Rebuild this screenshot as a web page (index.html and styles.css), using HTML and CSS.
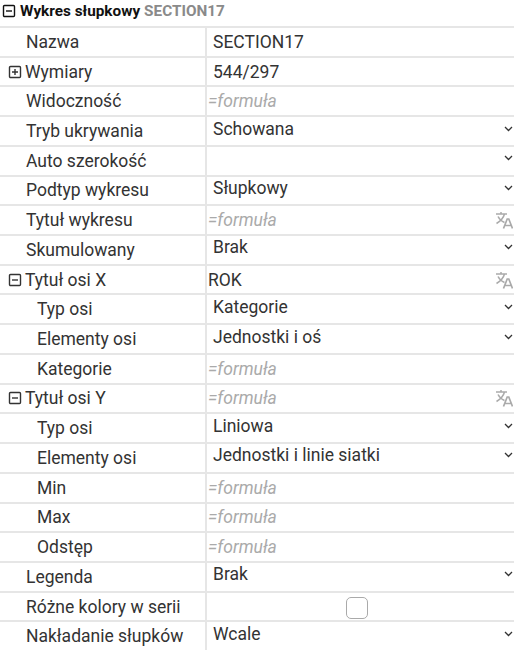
FILE: index.html
```html
<!DOCTYPE html>
<html lang="pl">
<head>
    <meta charset="UTF-8">
    <title>Wykres słupkowy</title>
    <link rel="stylesheet" href="styles.css">
</head>
<body>
    <svg class="icon-defs" width="0" height="0">
        <symbol id="minus" viewBox="0 0 14 14"><rect x="1.5" y="1.5" width="11" height="11" rx="1" fill="none" stroke="currentColor" stroke-width="1.4"/><path d="M4 7h6" stroke="currentColor" stroke-width="1.4"/></symbol>
        <symbol id="plus" viewBox="0 0 14 14"><rect x="1.5" y="1.5" width="11" height="11" rx="1" fill="none" stroke="currentColor" stroke-width="1.4"/><path d="M4 7h6M7 4v6" stroke="currentColor" stroke-width="1.4"/></symbol>
        <symbol id="chevron" viewBox="0 0 9 6"><path d="M1 1l3.5 3.5L8 1" fill="none" stroke="currentColor" stroke-width="1.3"/></symbol>
        <symbol id="translate" viewBox="0 0 18 18"><path d="M1 3h11M6 1v2M9.500 3C8.500 7 5.500 10 1.500 12.500M3 5.500c1.500 3 4 5 6.500 6" fill="none" stroke="currentColor" stroke-width="1.500"/><path d="M8.500 17.500l3.700-9.500h1.600l3.700 9.500M10 14.500h6" fill="none" stroke="currentColor" stroke-width="1.700"/></symbol>
    </svg>

    <div class="panel-title">
        <svg class="toggle toggle-dark"><use href="#minus"/></svg>
        <b>Wykres słupkowy</b> <span class="section-id">SECTION17</span>
    </div>

    <div class="props">
        <div class="row"><div class="name">Nazwa</div><div class="val text">SECTION17</div></div>
        <div class="row"><div class="name"><svg class="toggle"><use href="#plus"/></svg>Wymiary</div><div class="val text">544/297</div></div>
        <div class="row"><div class="name">Widoczność</div><div class="val formula">=formuła</div></div>
        <div class="row"><div class="name">Tryb ukrywania</div><div class="val choice">Schowana<svg class="chevron"><use href="#chevron"/></svg></div></div>
        <div class="row"><div class="name">Auto szerokość</div><div class="val choice"><svg class="chevron"><use href="#chevron"/></svg></div></div>
        <div class="row"><div class="name">Podtyp wykresu</div><div class="val choice">Słupkowy<svg class="chevron"><use href="#chevron"/></svg></div></div>
        <div class="row"><div class="name">Tytuł wykresu</div><div class="val formula">=formuła<svg class="translate"><use href="#translate"/></svg></div></div>
        <div class="row"><div class="name">Skumulowany</div><div class="val choice">Brak<svg class="chevron"><use href="#chevron"/></svg></div></div>
        <div class="row"><div class="name"><svg class="toggle"><use href="#minus"/></svg>Tytuł osi X</div><div class="val">ROK<svg class="translate"><use href="#translate"/></svg></div></div>
        <div class="row"><div class="name sub">Typ osi</div><div class="val choice">Kategorie<svg class="chevron"><use href="#chevron"/></svg></div></div>
        <div class="row"><div class="name sub">Elementy osi</div><div class="val choice">Jednostki i oś<svg class="chevron"><use href="#chevron"/></svg></div></div>
        <div class="row"><div class="name sub">Kategorie</div><div class="val formula">=formuła</div></div>
        <div class="row"><div class="name"><svg class="toggle"><use href="#minus"/></svg>Tytuł osi Y</div><div class="val formula">=formuła<svg class="translate"><use href="#translate"/></svg></div></div>
        <div class="row"><div class="name sub">Typ osi</div><div class="val choice">Liniowa<svg class="chevron"><use href="#chevron"/></svg></div></div>
        <div class="row"><div class="name sub">Elementy osi</div><div class="val choice">Jednostki i linie siatki<svg class="chevron"><use href="#chevron"/></svg></div></div>
        <div class="row"><div class="name sub">Min</div><div class="val formula">=formuła</div></div>
        <div class="row"><div class="name sub">Max</div><div class="val formula">=formuła</div></div>
        <div class="row"><div class="name sub">Odstęp</div><div class="val formula">=formuła</div></div>
        <div class="row"><div class="name">Legenda</div><div class="val choice">Brak<svg class="chevron"><use href="#chevron"/></svg></div></div>
        <div class="row"><div class="name">Różne kolory w serii</div><div class="val check"><span class="checkbox"></span></div></div>
        <div class="row"><div class="name">Nakładanie słupków</div><div class="val choice">Wcale<svg class="chevron"><use href="#chevron"/></svg></div></div>
    </div>
</body>
</html>
```

FILE: styles.css
```css
html, body {
    height: 100%;
}
body {
    margin: 0;
    overflow: hidden;
    background-color: #fff;
    color: #333;
    font-family: Roboto, "Liberation Sans", sans-serif;
    font-size: 17.5px;
}
.icon-defs {
    position: absolute;
}
.panel-title {
    display: flex;
    align-items: center;
    height: 21px;
    padding-left: 2px;
    font-size: 15.3px;
    color: #111;
}
.panel-title b {
    margin-right: 4px;
}
.section-id {
    color: #8a8a8a;
    font-weight: bold;
}
.toggle {
    flex: none;
    width: 14px;
    height: 14px;
    margin-right: 4px;
    color: #333;
}
.toggle-dark {
    color: #111;
}
.props {
    margin-top: 5px;
    border-top: 2px solid #e6e6e6;
}
.row {
    display: grid;
    grid-template-columns: 207px 1fr;
    box-sizing: border-box;
    height: 29.72px;
    border-bottom: 2px solid #e6e6e6;
}
.name {
    display: flex;
    align-items: center;
    padding-left: 26px;
    border-right: 2px solid #e6e6e6;
    white-space: nowrap;
}
.name .toggle {
    margin-left: -18px;
    margin-right: 3px;
}
.name.sub {
    padding-left: 37px;
}
.val {
    display: flex;
    align-items: center;
    justify-content: space-between;
    padding: 0 1px;
    white-space: nowrap;
}
.text {
    padding-left: 6px;
}
.choice {
    padding-left: 6px;
    padding-bottom: 5px;
}
.formula {
    color: #aaa;
    font-style: italic;
}
.check {
    justify-content: center;
    padding: 0;
}
.chevron {
    flex: none;
    width: 9px;
    height: 6px;
    margin-left: auto;
    color: #333;
}
.translate {
    flex: none;
    width: 18px;
    height: 18px;
    margin-left: auto;
    color: #aaa;
}
.checkbox {
    box-sizing: border-box;
    width: 22px;
    height: 22px;
    margin-top: 2px;
    margin-right: 8px;
    border: 1px solid #aaa;
    border-radius: 5px;
}
```
